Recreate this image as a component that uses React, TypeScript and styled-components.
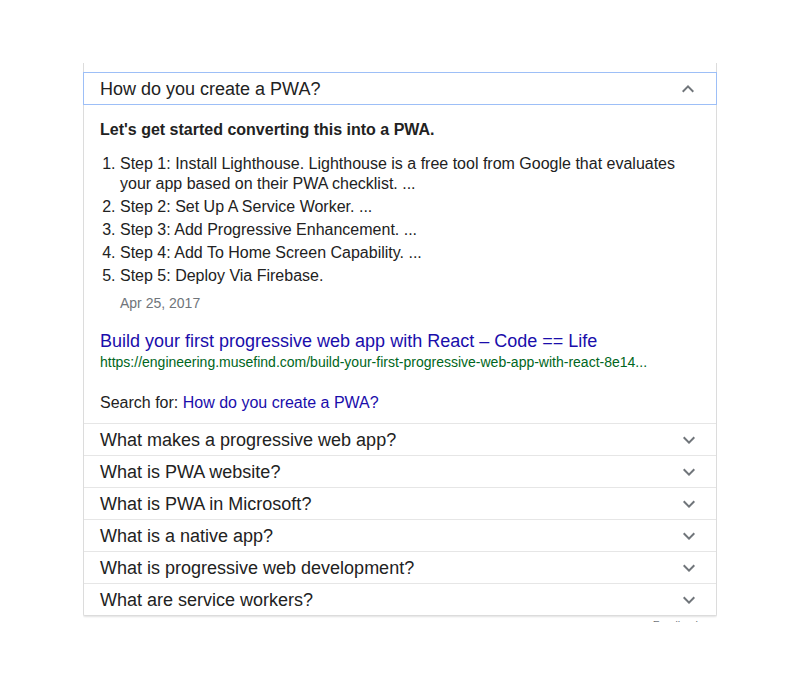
import React from "react";
import styled, { createGlobalStyle } from "styled-components";

const Global = createGlobalStyle`
  html, body { margin: 0; padding: 0; background: #fff; }
  body { font-family: "Liberation Sans", Arial, sans-serif; color: #222; }
`;

const Page = styled.div`
  padding: 63px 0 0 83px;
`;

const Frame = styled.div`
  width: 634px;
  height: 559px;
  overflow: hidden;
`;

const Card = styled.div`
  background: #fff;
  border: 1px solid #dcdcdc;
  border-top: none;
  border-radius: 0 0 2px 2px;
  box-shadow: 0 1px 2px rgba(0, 0, 0, 0.12);
  padding-top: 9px;
`;

const Row = styled.div<{ $open?: boolean }>`
  display: flex;
  align-items: center;
  justify-content: space-between;
  box-sizing: border-box;
  height: ${(p) => (p.$open ? "33px" : "32px")};
  margin: ${(p) => (p.$open ? "0 -1px" : "0")};
  padding: ${(p) => (p.$open ? "0 16px 0 16px" : "0 15px 0 16px")};
  border: ${(p) => (p.$open ? "1px solid #9dbff7" : "none")};
  border-top: ${(p) => (p.$open ? "1px solid #9dbff7" : "1px solid #e6e6e6")};
  font-size: 18px;
  color: #222;
`;

const Question = styled.span`
  line-height: 22px;
  white-space: nowrap;
`;

const Chevron = styled.svg`
  width: 24px;
  height: 24px;
  fill: #70757a;
  flex: none;
`;

const Answer = styled.div`
  padding: 15px 16px 10px 16px;
  font-size: 16px;
`;

const Heading = styled.div`
  font-weight: bold;
  line-height: 20px;
  margin-bottom: 14px;
`;

const Steps = styled.ol`
  margin: 0;
  padding-left: 20px;
  display: flex;
  flex-direction: column;
  gap: 3px;
`;

const Step = styled.li`
  line-height: 20px;
`;

const DateLine = styled.div`
  font-size: 14px;
  line-height: 18px;
  color: #70757a;
  margin: 8px 0 0 20px;
`;

const ResultTitle = styled.a`
  display: block;
  margin-top: 17px;
  font-size: 18px;
  line-height: 24px;
  color: #1a0dab;
  text-decoration: none;
`;

const ResultUrl = styled.div`
  font-size: 14px;
  line-height: 18px;
  color: #006621;
  white-space: nowrap;
`;

const SearchFor = styled.div`
  margin-top: 22px;
  line-height: 20px;
`;

const SearchLink = styled.a`
  color: #1a0dab;
  text-decoration: none;
`;

const Feedback = styled.div`
  text-align: right;
  padding: 1px 16px 0 0;
  font-size: 11px;
  line-height: 16px;
  color: #70757a;
`;

const Up = () => (
  <Chevron viewBox="0 0 24 24">
    <path d="M7.41 15.41L12 10.83l4.59 4.58L18 14l-6-6-6 6z" />
  </Chevron>
);

const Down = () => (
  <Chevron viewBox="0 0 24 24">
    <path d="M16.59 8.59L12 13.17 7.41 8.59 6 10l6 6 6-6z" />
  </Chevron>
);

const steps = [
  "Step 1: Install Lighthouse. Lighthouse is a free tool from Google that evaluates your app based on their PWA checklist. ...",
  "Step 2: Set Up A Service Worker. ...",
  "Step 3: Add Progressive Enhancement. ...",
  "Step 4: Add To Home Screen Capability. ...",
  "Step 5: Deploy Via Firebase.",
];

const others = [
  "What makes a progressive web app?",
  "What is PWA website?",
  "What is PWA in Microsoft?",
  "What is a native app?",
  "What is progressive web development?",
  "What are service workers?",
];

export default function App() {
  return (
    <>
      <Global />
      <Page>
        <Frame>
          <Card>
            <Row $open>
              <Question>How do you create a PWA?</Question>
              <Up />
            </Row>
            <Answer>
              <Heading>Let's get started converting this into a PWA.</Heading>
              <Steps>
                {steps.map((s) => (
                  <Step key={s}>{s}</Step>
                ))}
              </Steps>
              <DateLine>Apr 25, 2017</DateLine>
              <ResultTitle href="#">
                Build your first progressive web app with React – Code == Life
              </ResultTitle>
              <ResultUrl>
                https://engineering.musefind.com/build-your-first-progressive-web-app-with-react-8e14...
              </ResultUrl>
              <SearchFor>
                Search for: <SearchLink href="#">How do you create a PWA?</SearchLink>
              </SearchFor>
            </Answer>
            {others.map((q) => (
              <Row key={q}>
                <Question>{q}</Question>
                <Down />
              </Row>
            ))}
          </Card>
          <Feedback>Feedback</Feedback>
        </Frame>
      </Page>
    </>
  );
}
